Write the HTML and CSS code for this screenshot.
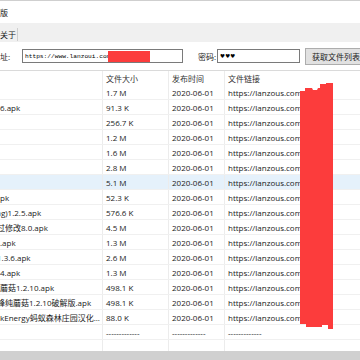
FILE: index.html
```html
<!DOCTYPE html>
<html lang="zh">
<head>
<meta charset="utf-8">
<title>蓝奏云解析</title>
<link rel="stylesheet" href="styles.css">
</head>
<body>
<div class="window">
  <div class="titlebar"><span class="title">版</span></div>
  <div class="menubar"><span class="menu-item">关于</span></div>
  <div class="toolbar">
    <span class="lbl lbl-url">址:</span>
    <div class="field field-url"><span>https://www.lanzoui.com</span><span class="redact"></span></div>
    <span class="lbl lbl-pwd">密码:</span>
    <div class="field field-pwd"><span class="dots">♥♥♥</span></div>
    <div class="btn">获取文件列表</div>
  </div>
  <div class="list">
    <div class="row header">
      <div class="cell name"></div>
      <div class="cell">文件大小</div>
      <div class="cell">发布时间</div>
      <div class="cell">文件链接</div>
    </div>
    <div class="row"><div class="cell name"></div><div class="cell">1.7 M</div><div class="cell">2020-06-01</div><div class="cell">https://lanzous.com/</div></div>
    <div class="row"><div class="cell name">6.apk</div><div class="cell">91.3 K</div><div class="cell">2020-06-01</div><div class="cell">https://lanzous.com/</div></div>
    <div class="row"><div class="cell name"></div><div class="cell">256.7 K</div><div class="cell">2020-06-01</div><div class="cell">https://lanzous.com/</div></div>
    <div class="row"><div class="cell name"></div><div class="cell">1.2 M</div><div class="cell">2020-06-01</div><div class="cell">https://lanzous.com/</div></div>
    <div class="row"><div class="cell name"></div><div class="cell">1.6 M</div><div class="cell">2020-06-01</div><div class="cell">https://lanzous.com/</div></div>
    <div class="row"><div class="cell name"></div><div class="cell">2.8 M</div><div class="cell">2020-06-01</div><div class="cell">https://lanzous.com/</div></div>
    <div class="row selected"><div class="cell name"></div><div class="cell">5.1 M</div><div class="cell">2020-06-01</div><div class="cell">https://lanzous.com/</div></div>
    <div class="row"><div class="cell name">pk</div><div class="cell">52.3 K</div><div class="cell">2020-06-01</div><div class="cell">https://lanzous.com/</div></div>
    <div class="row"><div class="cell name"><span class="cut4">ng)1.2.5.apk</span></div><div class="cell">576.6 K</div><div class="cell">2020-06-01</div><div class="cell">https://lanzous.com/</div></div>
    <div class="row"><div class="cell name"><span class="cut3">过修改8.0.apk</span></div><div class="cell">4.5 M</div><div class="cell">2020-06-01</div><div class="cell">https://lanzous.com/</div></div>
    <div class="row"><div class="cell name">.apk</div><div class="cell">1.3 M</div><div class="cell">2020-06-01</div><div class="cell">https://lanzous.com/</div></div>
    <div class="row"><div class="cell name"><span class="cut3">1.3.6.apk</span></div><div class="cell">2.6 M</div><div class="cell">2020-06-01</div><div class="cell">https://lanzous.com/</div></div>
    <div class="row"><div class="cell name">4.apk</div><div class="cell">1.3 M</div><div class="cell">2020-06-01</div><div class="cell">https://lanzous.com/</div></div>
    <div class="row"><div class="cell name">蘑菇1.2.10.apk</div><div class="cell">498.1 K</div><div class="cell">2020-06-01</div><div class="cell">https://lanzous.com/</div></div>
    <div class="row"><div class="cell name"><span class="cut3">峰纯蘑菇1.2.10破解版.apk</span></div><div class="cell">498.1 K</div><div class="cell">2020-06-01</div><div class="cell">https://lanzous.com/</div></div>
    <div class="row"><div class="cell name">kEnergy蚂蚁森林庄园汉化...</div><div class="cell">88.0 K</div><div class="cell">2020-06-01</div><div class="cell">https://lanzous.com/</div></div>
    <div class="row"><div class="cell name"></div><div class="cell">-------------</div><div class="cell">-------------</div><div class="cell">-------------</div></div>
    <div class="row filler"><div class="cell name"></div><div class="cell"></div><div class="cell"></div><div class="cell"></div></div>
  </div>
  <div class="hscroll"></div>
  <svg class="scribble" width="360" height="360" viewBox="0 0 360 360">
    <polygon fill="#fc3c3c" points="300,91 305,91 305,88 312,88 313,90 317,90 318,88 320,88 320,84 326,84 326,83 333,83 333,329 328,329 328,325 322,325 322,327 306,327 306,324 300,324"/>
  </svg>
</div>
</body>
</html>
```

FILE: styles.css
```css
* { box-sizing: border-box; margin: 0; padding: 0; }
html, body { width: 360px; height: 360px; overflow: hidden; background: #fff; }
body {
  font-family: "Open Sans", "Noto Sans CJK SC", sans-serif;
  font-size: 8px;
  color: #1a1a1a;
}
.window { position: relative; width: 360px; height: 360px; overflow: hidden; }

.titlebar {
  height: 23px;
  border-top: 1px solid #cfcfcf;
  display: flex;
  align-items: center;
}
.title { color: #111; }

.menubar {
  height: 19px;
  background: #f0f0f0;
  display: flex;
  align-items: flex-end;
  padding-bottom: 1px;
}
.menu-item {
  height: 13px;
  line-height: 13px;
  padding-right: 1px;
  border-right: 1px solid #cfcfcf;
}

.toolbar {
  height: 28px;
  display: flex;
  align-items: center;
  white-space: nowrap;
}
.toolbar > * { flex-shrink: 0; }
.lbl-url { width: 22px; }
.lbl-pwd { margin-left: 15px; width: 19px; }
.field {
  height: 14px;
  border: 1px solid #7a7a7a;
  background: #fff;
  display: flex;
  align-items: center;
  padding-left: 2px;
}
.field-url {
  width: 161px;
  font-family: "Liberation Mono", monospace;
  font-size: 6.2px;
  color: #000;
}
.redact {
  display: inline-block;
  width: 42px;
  height: 11px;
  background: #fc3c3c;
  margin-left: -2px;
}
.field-pwd { width: 83px; }
.dots { font-family: "DejaVu Sans", sans-serif; font-size: 5.5px; color: #000; letter-spacing: 0.2px; }
.btn {
  margin-left: 5px;
  width: 62px;
  height: 17px;
  background: #e1e1e1;
  border: 1px solid #adadad;
  padding-left: 6px;
  display: flex;
  align-items: center;
  color: #222;
}

.list { border-top: 1px solid #dadada; }
.row {
  display: grid;
  grid-template-columns: 102px 66px 56px 1fr;
  height: 15px;
  border-bottom: 1px solid #f0f0f0;
}
.row.header { height: 14px; border-bottom: none; color: #333; }
.row.selected { background: #e5f1fb; }
.row.filler { height: 11px; border-bottom: none; }
.cell {
  border-left: 1px solid #ececec;
  padding-left: 3px;
  line-height: 15px;
  white-space: nowrap;
  overflow: hidden;
}
.row .cell:nth-child(3), .row .cell:nth-child(4) { padding-left: 3px; }
.cell.name { border-left: none; padding-left: 0; }
.cut3 { display: inline-block; margin-left: -3px; }
.cut4 { display: inline-block; margin-left: -4px; }

.hscroll { height: 9px; background: #d0d0d0; }

.scribble { position: absolute; left: 0; top: 0; pointer-events: none; }
```
